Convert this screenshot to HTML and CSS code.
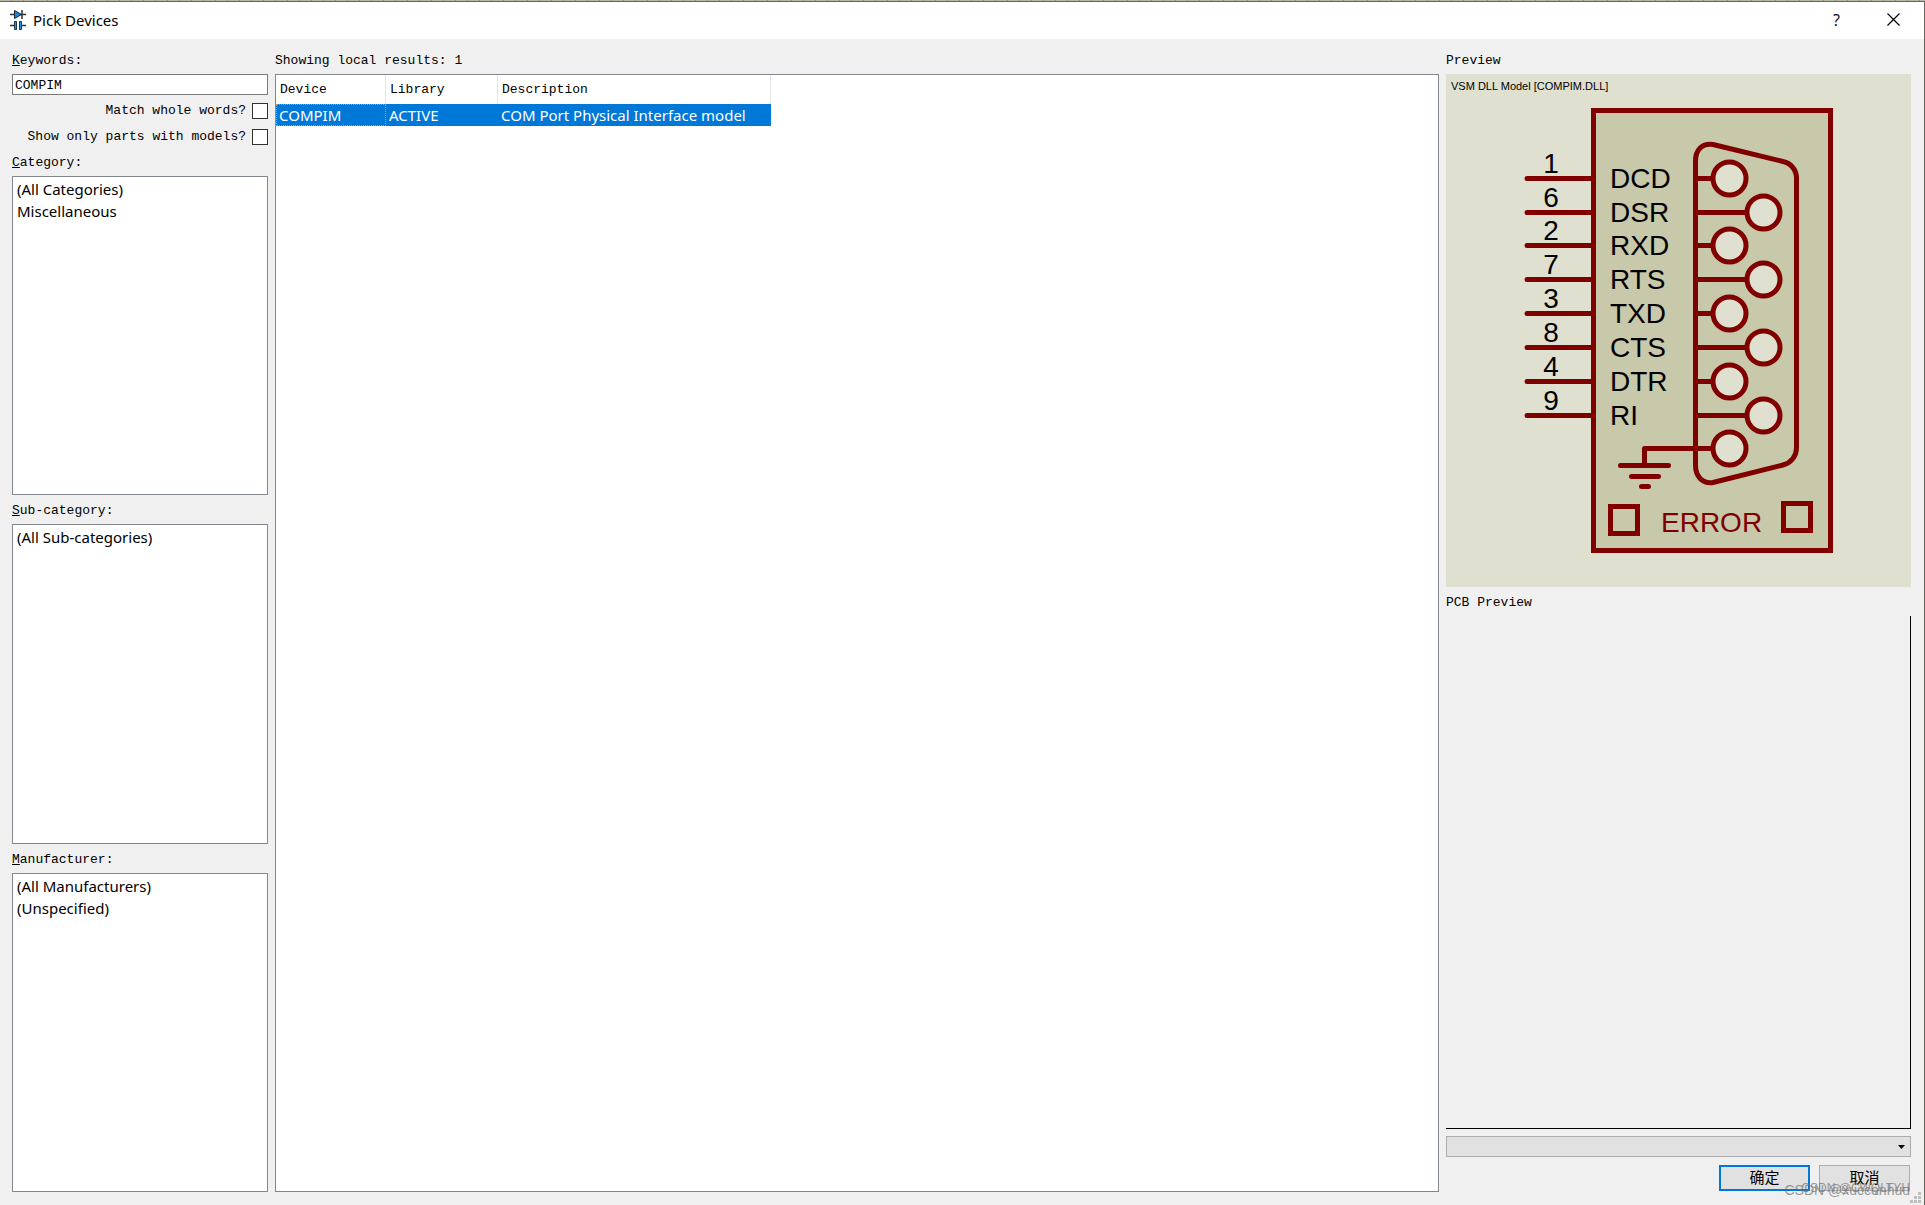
FILE: index.html
```html
<!DOCTYPE html>
<html lang="en">
<head>
<meta charset="utf-8">
<title>Pick Devices</title>
<link rel="stylesheet" href="styles.css">
</head>
<body>
<div class="dialog">
  <header class="titlebar">
    <svg class="app-icon" width="16" height="22" viewBox="0 0 16 22" aria-hidden="true">
      <path d="M0 5.500h16M0 16.500h5M11 16.500h5M12 1v9" stroke="#333" stroke-width="1.500" fill="none"/>
      <path d="M4.500 1.500v8l7-4z" fill="#1c86d8" stroke="#123"/>
      <path d="M4.500 12.500h2v8h-2zM9.500 12.500h2v8h-2z" fill="#1c9cf0" stroke="#1a3550"/>
    </svg>
    <h1 class="title">Pick Devices</h1>
    <button class="caption-button" type="button" aria-label="Help">?</button>
    <button class="caption-button" type="button" aria-label="Close">
      <svg width="13" height="13" viewBox="0 0 13 13" aria-hidden="true"><path d="M.5.5l12 12M12.500.5l-12 12" stroke="#000" stroke-width="1.200"/></svg>
    </button>
  </header>
  <main class="content">
    <section class="filters">
      <label class="label" for="keywords"><u>K</u>eywords:</label>
      <input class="keywords" id="keywords" type="text" value="COMPIM">
      <label class="check">Match whole words?<input type="checkbox"></label>
      <label class="check">Show only parts with models?<input type="checkbox"></label>
      <div class="field">
        <label class="label" for="category"><u>C</u>ategory:</label>
        <select class="list" id="category" size="8"><option>(All Categories)</option><option>Miscellaneous</option></select>
      </div>
      <div class="field">
        <label class="label" for="subcategory"><u>S</u>ub-category:</label>
        <select class="list" id="subcategory" size="8"><option>(All Sub-categories)</option></select>
      </div>
      <div class="field">
        <label class="label" for="manufacturer"><u>M</u>anufacturer:</label>
        <select class="list" id="manufacturer" size="8"><option>(All Manufacturers)</option><option>(Unspecified)</option></select>
      </div>
    </section>
    <section class="results">
      <div class="label">Showing local results: 1</div>
      <div class="results-box">
        <table class="devices">
          <thead><tr><th class="col-device">Device</th><th class="col-library">Library</th><th class="col-description">Description</th></tr></thead>
          <tbody><tr><td class="focused">COMPIM</td><td>ACTIVE</td><td>COM Port Physical Interface model</td></tr></tbody>
        </table>
      </div>
    </section>
    <section class="previews">
      <div class="label">Preview</div>
      <svg class="schematic" viewBox="0 0 465 513" role="img" aria-label="COMPIM schematic">
        <text class="model" x="5" y="16">VSM DLL Model [COMPIM.DLL]</text>
        <rect class="body" x="147.500" y="36.500" width="237" height="440"/>
        <g class="wire">
          <path d="M81 104.500h66M81 138.500h66M81 171.500h66M81 205.500h66M81 239.500h66M81 273.500h66M81 307.500h66M81 341.500h66"/>
          <path d="M249.500 87C249.500 76 256 69 267 70.500L337 87.500C345 89 350.500 96 350.500 104V374C350.500 382 345 389 337 391L267 408.500C256 410 249.500 402 249.500 391Z"/>
          <path d="M250 104.500h20M250 138.500h54M250 171.500h20M250 205.500h54M250 239.500h20M250 273.500h54M250 307.500h20M250 341.500h54"/>
          <path d="M270 374.500H198.500V391.500M174.500 391.500h48M185.500 402.500h27M195.500 412.500h7"/>
        </g>
        <g class="socket">
          <circle cx="283.500" cy="104.500" r="16.500"/><circle cx="317.500" cy="138.500" r="16.500"/><circle cx="283.500" cy="171.500" r="16.500"/>
          <circle cx="317.500" cy="205.500" r="16.500"/><circle cx="283.500" cy="239.500" r="16.500"/><circle cx="317.500" cy="273.500" r="16.500"/>
          <circle cx="283.500" cy="307.500" r="16.500"/><circle cx="317.500" cy="341.500" r="16.500"/><circle cx="283.500" cy="374.500" r="16.500"/>
        </g>
        <rect class="body" x="164.500" y="432.500" width="27" height="27"/>
        <rect class="body" x="337.500" y="429.500" width="27" height="27"/>
        <g class="pin-number">
          <text x="105" y="99">1</text><text x="105" y="133">6</text><text x="105" y="166">2</text><text x="105" y="200">7</text>
          <text x="105" y="234">3</text><text x="105" y="268">8</text><text x="105" y="302">4</text><text x="105" y="336">9</text>
        </g>
        <g class="pin-name">
          <text x="164" y="114">DCD</text><text x="164" y="148">DSR</text><text x="164" y="181">RXD</text><text x="164" y="215">RTS</text>
          <text x="164" y="249">TXD</text><text x="164" y="283">CTS</text><text x="164" y="317">DTR</text><text x="164" y="351">RI</text>
          <text class="error" x="215" y="458">ERROR</text>
        </g>
      </svg>
      <div class="label pcb-label">PCB Preview</div>
      <div class="pcb"></div>
      <select class="package" aria-label="Package"></select>
      <div class="actions">
        <button class="button primary" type="button">确定</button>
        <button class="button" type="button">取消</button>
      </div>
    </section>
  </main>
  <div class="watermark"><span>CSDN @xucconhuu</span><span class="second">CSDN @CWQLTYH</span></div>
  <svg class="grip" width="11" height="11" viewBox="0 0 11 11" aria-hidden="true"><path d="M8 0h3v3H8zM4 4h3v3H4zM8 4h3v3H8zM0 8h3v3H0zM4 8h3v3H4zM8 8h3v3H8z" fill="#bfbfbf"/></svg>
</div>
</body>
</html>
```
FILE: styles.css
```css
* { box-sizing: border-box; }

body {
  margin: 0;
  color: #000;
  background: #f0f0f0;
  font: 13px/20px "Liberation Mono", "Noto Sans CJK SC", monospace;
}

.dialog {
  position: relative;
  display: flex;
  flex-direction: column;
  min-height: 100vh;
  border-top: 2px solid #66665a;
  border-right: 1px solid #66665a;
}

.dialog::before {
  content: "";
  position: absolute;
  top: -2px;
  left: 0;
  right: -1px;
  height: 1px;
  background: repeating-linear-gradient(90deg, #b9baa4 0 11px, #96978a 11px 12px);
}

.titlebar {
  display: flex;
  align-items: center;
  height: 37px;
  padding: 0 2px 2px 10px;
  background: #fff;
}

.title {
  flex: 1;
  margin: 0 0 0 7px;
  font: 15px/22px "Noto Sans", "Open Sans", sans-serif;
}

.caption-button {
  display: flex;
  align-items: center;
  justify-content: center;
  width: 57px;
  height: 35px;
  padding: 0;
  border: 0;
  background: none;
  color: #000;
  font: 16px/20px "Open Sans", sans-serif;
}

.content {
  flex: 1;
  display: grid;
  grid-template-columns: 256px minmax(0, 1fr) 465px;
  gap: 7px;
  padding: 11px 13px 13px 12px;
}

.filters, .results, .previews, .field {
  display: flex;
  flex-direction: column;
}

.label {
  display: block;
  height: 20px;
  margin-bottom: 4px;
  line-height: 22px;
}

.keywords {
  height: 21px;
  margin-bottom: 3px;
  padding: 2px 2px 0;
  border: 1px solid #7a7a7a;
  border-radius: 0;
  background: #fff;
  color: #000;
  font: inherit;
  outline: 0;
}

.check {
  display: flex;
  align-items: center;
  justify-content: flex-end;
  gap: 6px;
  height: 26px;
  line-height: 22px;
}

.check input {
  appearance: none;
  width: 16px;
  height: 16px;
  margin: 0;
  border: 1px solid #333;
  background: #fff;
}

.field {
  flex: 1;
  margin-top: 5px;
}

.check + .field { margin-top: 2px; }

.list {
  flex: 1;
  width: 100%;
  min-height: 0;
  padding: 2px 0;
  border: 1px solid #828790;
  border-radius: 0;
  background: #fff;
  color: #000;
  font: 15px/22px "Noto Sans", "Open Sans", sans-serif;
  overflow: hidden;
  outline: 0;
}

.list option {
  min-height: 22px;
  padding: 0 4px;
  line-height: 22px;
}

.results-box {
  flex: 1;
  border: 1px solid #828790;
  background: #fff;
}

.devices {
  table-layout: fixed;
  width: 495px;
  border-collapse: separate;
  border-spacing: 0;
}

.col-device { width: 110px; }
.col-library { width: 112px; }
.col-description { width: 273px; }

.devices th {
  height: 29px;
  padding: 0 4px;
  border-right: 1px solid #e5e5e5;
  font-weight: 400;
  text-align: left;
}

.devices td {
  height: 22px;
  padding: 0 3px;
  background: #0078d7;
  color: #fff;
  font: 15px/22px "Noto Sans", "Open Sans", sans-serif;
  white-space: nowrap;
}

.devices .focused {
  outline: 1px dotted #ff8728;
  outline-offset: -1px;
}

.schematic {
  display: block;
  width: 100%;
  background: #dfe0d0;
  font-family: "Liberation Sans", Arial, sans-serif;
}

.model { font-size: 11px; }

.body {
  fill: #c8c8aa;
  stroke: #800000;
  stroke-width: 5px;
}

.wire {
  fill: none;
  stroke: #800000;
  stroke-width: 5px;
  stroke-linecap: round;
  stroke-linejoin: round;
}

.socket {
  fill: #dfe0d0;
  stroke: #800000;
  stroke-width: 5px;
}

.pin-number, .pin-name { font-size: 28px; }
.pin-number { text-anchor: middle; }
.error { fill: #800000; }

.pcb-label { margin-top: 5px; }

.pcb {
  flex: 1;
  border-right: 1px solid #000;
  border-bottom: 1px solid #000;
}

.package {
  appearance: none;
  width: 100%;
  height: 21px;
  margin: 7px 0 8px;
  border: 1px solid #adadad;
  border-radius: 0;
  background: #e1e1e1 url("data:image/svg+xml,%3Csvg xmlns='http://www.w3.org/2000/svg' width='7' height='4'%3E%3Cpath d='M0 0h7L3.500 4z'/%3E%3C/svg%3E") no-repeat right 5px center;
}

.actions {
  display: flex;
  justify-content: flex-end;
  gap: 9px;
  padding: 0 1px 1px 0;
}

.button {
  width: 91px;
  height: 26px;
  padding: 0 0 2px;
  border: 1px solid #adadad;
  background: #e1e1e1;
  color: #000;
  font: 15px/20px "Noto Sans CJK SC", sans-serif;
}

.primary { border: 2px solid #0078d7; }

.watermark {
  position: absolute;
  right: 14px;
  bottom: 6px;
  display: grid;
  justify-items: end;
  color: rgba(110, 110, 110, 0.7);
  font: 14px/18px "Liberation Sans", sans-serif;
  pointer-events: none;
}

.watermark span { grid-area: 1 / 1; }

.watermark .second {
  font-size: 12px;
  line-height: 14px;
}

.grip {
  position: absolute;
  right: 3px;
  bottom: 2px;
}
```
